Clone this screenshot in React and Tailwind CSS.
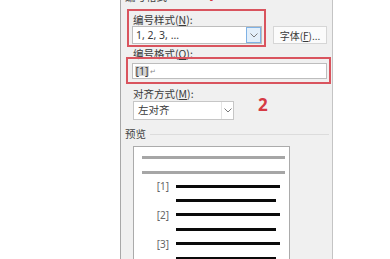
import React from "react";

const cjk = { fontFamily: '"Noto Sans CJK SC", "Noto Sans", sans-serif' };
const lat = { fontFamily: '"Noto Sans", "Noto Sans CJK SC", sans-serif' };

function Chevron({ className = "" }) {
  return (
    <svg width="8" height="5" viewBox="0 0 8 5" className={className}>
      <path d="M0.5 0.5 L4 4 L7.5 0.5" fill="none" stroke="#7a7a7a" strokeWidth="1" />
    </svg>
  );
}

function Label({ text, hot }) {
  return (
    <span className="text-[10.5px] text-[#3a3a3a]" style={cjk}>
      {text}(<span className="underline">{hot}</span>):
    </span>
  );
}

function PreviewRow({ label, width }) {
  return (
    <div className="flex items-center h-[14.4px] shrink-0">
      <div className="w-[42px] pr-[7px] text-right text-[10px] text-[#666] leading-none" style={lat}>
        {label}
      </div>
      <div className="h-[3px] bg-[#0a0a0a]" style={{ width }} />
    </div>
  );
}

export default function App() {
  return (
    <div className="w-[390px] h-[259px] bg-white flex overflow-hidden">
      <div className="w-[120px] shrink-0" />
      <div className="relative w-[213px] shrink-0 h-full bg-[#f0f0f0] border-l border-[#a8a8a8] border-r border-r-[#c4c4c4] flex flex-col [&>*]:shrink-0">
        {/* cut-off group header */}
        <div className="mt-[-9px] h-[12px] pl-[4px] text-[10.5px] leading-[12px] text-[#444]" style={cjk}>
          编号格式
        </div>
        {/* annotation 1 */}
        <div className="absolute left-[85px] top-[-13px] text-[#d63a44] text-[16px] font-bold leading-none" style={lat}>
          1
        </div>

        {/* row 1 */}
        <div className="flex items-start ml-[6px] mt-[6px]">
          <div className="w-[139px] h-[38px] border-2 border-[#d9545e] flex flex-col shrink-0">
            <div className="h-[14px] leading-[14px] pl-[4px] shrink-0">
              <Label text="编号样式" hot="N" />
            </div>
            <div className="ml-[3px] mt-[1px] w-[130px] h-[18px] shrink-0 bg-white border border-[#bdbdbd] flex items-center">
              <span className="flex-1 pl-[3px] text-[10.5px] text-[#3a3a3a] leading-none" style={lat}>
                1, 2, 3, …
              </span>
              <div className="w-[15px] h-full bg-[#e3effa] border border-[#7fb2e5] flex items-center justify-center">
                <Chevron />
              </div>
            </div>
          </div>
          <div className="ml-[7px] mt-[17px] w-[54px] h-[18px] shrink-0 bg-[#fbfbfb] border border-[#d6d6d6] flex items-center justify-center text-[10px] text-[#3a3a3a]" style={cjk}>
            字体(<span className="underline">F</span>)...
          </div>
        </div>

        {/* label 2 */}
        <div className="h-[10px] leading-[10px] ml-[12px]">
          <Label text="编号格式" hot="O" />
        </div>
        {/* red box 2 */}
        <div className="ml-[5px] w-[205px] h-[27px] border-2 border-[#d9545e] pl-[4px] pt-[4px]">
          <div className="w-[195px] h-[16px] bg-white border border-[#bdbdbd] flex items-center pl-[2px] text-[10.5px] text-[#3a3a3a] leading-none" style={lat}>
            <span className="bg-[#d4d4d4] px-[0.5px]">[1]</span>
            <span className="text-[7px] text-[#888] ml-[1px]">↵</span>
          </div>
        </div>

        {/* label 3 */}
        <div className="h-[14px] leading-[14px] ml-[12px] mt-[1px]">
          <Label text="对齐方式" hot="M" />
        </div>
        <div className="relative ml-[12px] mt-[2px] w-[101px] h-[19px] bg-white border border-[#c6c6c6] flex items-center">
          <span className="flex-1 pl-[4px] text-[10.5px] text-[#3a3a3a] leading-none" style={cjk}>
            左对齐
          </span>
          <div className="w-[12px] h-full border-l border-[#e4e4e4] flex items-center justify-center">
            <Chevron />
          </div>
        </div>
        {/* annotation 2 */}
        <div className="absolute left-[137px] top-[96px] text-[#d63a44] text-[17px] font-bold leading-none" style={lat}>
          2
        </div>

        {/* preview header */}
        <div className="flex items-center h-[14px] mt-[7px] ml-[4px] mr-[3px]">
          <span className="text-[10.5px] leading-[14px] text-[#444]" style={cjk}>
            预览
          </span>
          <div className="flex-1 h-px bg-[#dcdcdc] ml-[4px]" />
        </div>

        {/* preview box */}
        <div className="ml-[12px] mt-[5px] w-[157px] h-[140px] bg-white border border-[#ababab] flex flex-col">
          <div className="ml-[8px] mt-[9px] w-[143px] h-[3px] shrink-0 bg-[#a6a6a6]" />
          <div className="ml-[8px] mt-[12px] w-[143px] h-[3px] shrink-0 bg-[#a6a6a6]" />
          <div className="mt-[5px] flex flex-col shrink-0">
            <PreviewRow label="[1]" width={104} />
            <PreviewRow label="" width={100} />
            <PreviewRow label="[2]" width={104} />
            <PreviewRow label="" width={100} />
            <PreviewRow label="[3]" width={104} />
            <PreviewRow label="" width={100} />
          </div>
        </div>
      </div>
      <div className="flex-1" />
    </div>
  );
}
